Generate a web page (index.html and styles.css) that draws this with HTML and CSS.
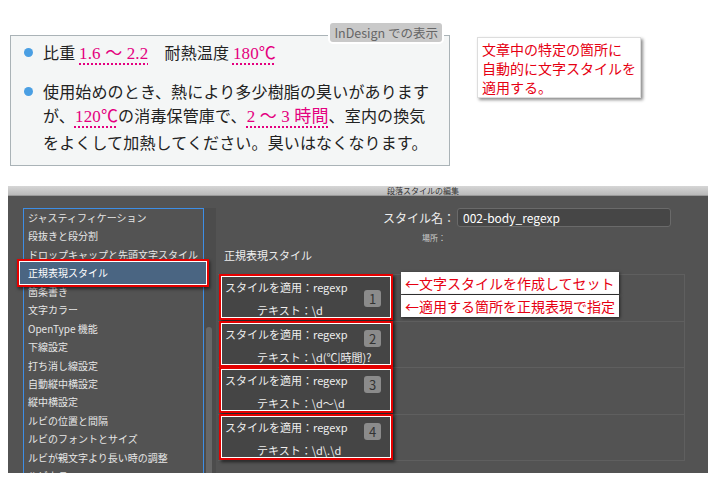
FILE: index.html
```html
<!DOCTYPE html>
<html lang="ja">
<head>
    <meta charset="UTF-8">
    <title>正規表現スタイル</title>
    <link rel="stylesheet" href="styles.css">
</head>
<body>
    <div class="top">
        <div class="preview">
            <span class="preview-label">InDesign での表示</span>
            <ul class="bullets">
                <li>
                    <span class="dot"></span>
                    <p>比重 <span class="num">1.6 ～ 2.2</span>　耐熱温度 <span class="num">180℃</span></p>
                </li>
                <li>
                    <span class="dot"></span>
                    <p>使用始めのとき、熱により多少樹脂の臭いがあります が、<span class="num">120℃</span>の消毒保管庫で、<span class="num">2 ～ 3 時間</span>、室内の換気をよくして加熱してください。臭いはなくなります。</p>
                </li>
            </ul>
        </div>
        <div class="note">文章中の特定の箇所に<br>自動的に文字スタイルを<br>適用する。</div>
    </div>

    <div class="dialog">
        <div class="titlebar">段落スタイルの編集</div>
        <div class="dialog-body">
            <div class="side">
                <ul class="cat-list">
                    <li>ジャスティフィケーション</li>
                    <li>段抜きと段分割</li>
                    <li>ドロップキャップと先頭文字スタイル</li>
                    <li class="selected">正規表現スタイル</li>
                    <li>箇条書き</li>
                    <li>文字カラー</li>
                    <li>OpenType 機能</li>
                    <li>下線設定</li>
                    <li>打ち消し線設定</li>
                    <li>自動縦中横設定</li>
                    <li>縦中横設定</li>
                    <li>ルビの位置と間隔</li>
                    <li>ルビのフォントとサイズ</li>
                    <li>ルビが親文字より長い時の調整</li>
                    <li>ルビカラー</li>
                </ul>
                <div class="scrollbar"><div class="thumb"></div></div>
            </div>

            <div class="main">
                <div class="name-row">
                    <label>スタイル名：</label>
                    <div class="name-input">002-body_regexp</div>
                </div>
                <div class="place">場所：</div>
                <div class="section-title">正規表現スタイル</div>

                <div class="regex-panel">
                    <div class="regex-row">
                        <div class="rule">
                            <div class="rule-line">スタイルを適用：regexp</div>
                            <div class="rule-line indent">テキスト：\d</div>
                            <span class="badge low">1</span>
                        </div>
                    </div>
                    <div class="regex-row">
                        <div class="rule">
                            <div class="rule-line">スタイルを適用：regexp</div>
                            <div class="rule-line indent">テキスト：\d(℃|時間)?</div>
                            <span class="badge">2</span>
                        </div>
                    </div>
                    <div class="regex-row">
                        <div class="rule">
                            <div class="rule-line">スタイルを適用：regexp</div>
                            <div class="rule-line indent">テキスト：\d～\d</div>
                            <span class="badge">3</span>
                        </div>
                    </div>
                    <div class="regex-row">
                        <div class="rule">
                            <div class="rule-line">スタイルを適用：regexp</div>
                            <div class="rule-line indent">テキスト：\d\.\d</div>
                            <span class="badge">4</span>
                        </div>
                    </div>

                    <div class="callouts">
                        <div class="callout">←文字スタイルを作成してセット</div>
                        <div class="callout">←適用する箇所を正規表現で指定</div>
                    </div>
                </div>
            </div>
        </div>
    </div>
</body>
</html>
```

FILE: styles.css
```css
body {
    margin: 0;
    background: #fff;
    font-family: "Noto Sans CJK JP", "Noto Sans", sans-serif;
}
ul {
    list-style: none;
    margin: 0;
    padding: 0;
}

/* top: InDesign preview + note */
.top {
    display: flex;
    align-items: flex-start;
    height: 166px;
    padding: 35px 0 0 10px;
    box-sizing: border-box;
}
.preview {
    position: relative;
    width: 440px;
    height: 131px;
    box-sizing: border-box;
    border: 1px solid #aab3b7;
    background: #f4f6f6;
    padding: 4px 0 0 0;
}
.preview-label {
    position: absolute;
    top: -13px;
    right: 7px;
    height: 19px;
    line-height: 19px;
    padding: 0 4px;
    background: #c9c9c9;
    color: #666;
    font-size: 12.5px;
    border-radius: 3px;
    box-shadow: 0 0 0 2px #fff;
}
.bullets li {
    display: flex;
    align-items: flex-start;
}
.bullets li + li {
    margin-top: 12px;
}
.dot {
    flex: none;
    width: 9px;
    height: 9px;
    border-radius: 50%;
    background: #4a9fe3;
    margin: 8px 10px 0 13px;
}
.bullets p {
    margin: 0;
    width: 396px;
    font-size: 16px;
    letter-spacing: 0.15px;
    line-height: 24.5px;
    color: #222;
}
.num {
    font-family: "Liberation Serif", "Noto Sans CJK JP", serif;
    font-size: 17px;
    color: #e4007f;
    text-decoration: underline dotted #e4007f;
    text-decoration-thickness: 2px;
    text-underline-offset: 4px;
}
.note {
    margin: 2px 0 0 27px;
    width: 164px;
    height: 61px;
    box-sizing: border-box;
    padding: 2px 4px;
    background: #fff;
    border: 1px solid #ddd;
    box-shadow: 2px 2px 3px rgba(0,0,0,0.45);
    color: #e60012;
    font-size: 14px;
    line-height: 19px;
    white-space: nowrap;
}

/* dialog */
.dialog {
    margin: 20px 0 0 8px;
    width: 700px;
}
.titlebar {
    height: 10px;
    line-height: 10px;
    padding-left: 379px;
    background: linear-gradient(#d6d6d6, #b9b9b9);
    color: #333;
    font-size: 8px;
    border-bottom: 1px solid #999;
    box-sizing: border-box;
}
.dialog-body {
    display: flex;
    height: 277px;
    background: #535353;
    overflow: hidden;
}
.side {
    display: flex;
    align-items: stretch;
    padding: 12px 0 0 15px;
}
.cat-list {
    width: 181px;
    box-sizing: border-box;
    border: 1px solid #3d8ee6;
    border-bottom: none;
    padding-top: 0;
}
.cat-list li {
    height: 18.45px;
    line-height: 18.45px;
    padding-left: 4px;
    font-size: 10px;
    color: #e6e6e6;
    white-space: nowrap;
}
.cat-list li.selected {
    position: relative;
    z-index: 1;
    height: 28px;
    line-height: 24px;
    margin: -5px -6px -4.55px -7px;
    padding-left: 9px;
    box-sizing: border-box;
    border: 2px solid #e50000;
    background: #4a6582;
    color: #fff;
    box-shadow: inset 0 0 0 1px #fff, 1px 2px 3px rgba(0,0,0,0.55);
}
.scrollbar {
    width: 12px;
    background: #4c4c4c;
    padding-top: 119px;
    box-sizing: border-box;
}
.thumb {
    width: 6px;
    height: 200px;
    margin-left: 2px;
    border-radius: 3px;
    background: #676767;
}
.main {
    flex: 1;
    padding: 12px 0 0 2px;
    color: #eee;
}
.name-row {
    display: flex;
    align-items: center;
    gap: 2px;
    padding-left: 165px;
}
.name-row label {
    font-size: 12px;
    line-height: 19px;
}
.name-input {
    width: 214px;
    height: 19px;
    line-height: 17px;
    box-sizing: border-box;
    padding-left: 5px;
    background: #464646;
    border: 1px solid #6a6a6a;
    border-radius: 3px;
    font-size: 12px;
    color: #fff;
}
.place {
    margin: 6px 0 0 204px;
    font-size: 8px;
    line-height: 10px;
    color: #ccc;
}
.section-title {
    margin: 5px 0 0 6px;
    font-size: 11px;
    line-height: 14px;
}
.regex-panel {
    position: relative;
    margin-top: 12px;
    width: 466px;
    border-top: 1px solid #5f5f5f;
    border-right: 1px solid #5f5f5f;
}
.regex-row {
    height: 47.5px;
    box-sizing: border-box;
    border-bottom: 1px solid #5f5f5f;
}
.rule {
    position: relative;
    width: 174px;
    height: 46px;
    margin: -1px 0 0 1px;
    box-sizing: border-box;
    border: 2px solid #e50000;
    background: #454545;
    box-shadow: inset 0 0 0 1px #fff, 2px 2px 3px rgba(0,0,0,0.6);
    padding-left: 4px;
}
.rule-line {
    font-size: 11px;
    line-height: 23px;
    color: #eee;
    white-space: nowrap;
}
.rule-line.indent {
    padding-left: 32px;
}
.badge {
    position: absolute;
    top: 7px;
    right: 10px;
    width: 17px;
    height: 17px;
    line-height: 17px;
    text-align: center;
    border-radius: 3px;
    background: #8b8b8b;
    color: #333;
    font-size: 13px;
}
.badge.low {
    top: 14px;
}
.callouts {
    position: absolute;
    top: -3px;
    left: 183px;
    display: flex;
    flex-direction: column;
    gap: 1px;
}
.callout {
    background: #fff;
    color: #e60012;
    font-size: 14px;
    line-height: 22px;
    padding: 0 4px;
    white-space: nowrap;
    box-shadow: 1px 1px 3px rgba(0,0,0,0.6);
}
```
